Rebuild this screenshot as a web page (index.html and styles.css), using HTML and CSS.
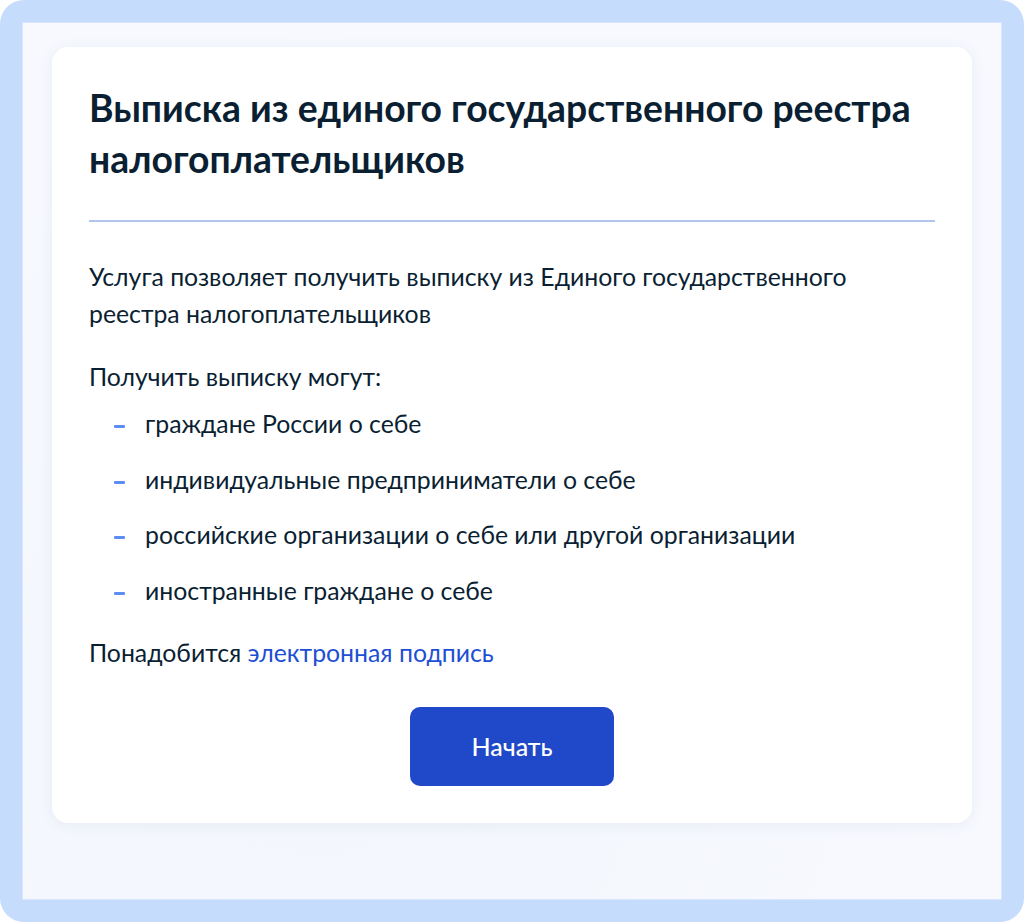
FILE: index.html
```html
<!DOCTYPE html>
<html lang="ru">
<head>
    <meta charset="UTF-8">
    <meta name="viewport" content="width=device-width, initial-scale=1.0">
    <title>Выписка из ЕГРН</title>
    <link rel="stylesheet" href="styles.css">
</head>
<body>
    <div class="frame">
        <div class="screen">
            <div class="card">
                <h1 class="title">Выписка из единого государственного реестра налогоплательщиков</h1>
                <hr class="divider">

                <p class="text">Услуга позволяет получить выписку из Единого государственного реестра налогоплательщиков</p>

                <p class="text text-lead">Получить выписку могут:</p>
                <ul class="list">
                    <li>граждане России о себе</li>
                    <li>индивидуальные предприниматели о себе</li>
                    <li>российские организации о себе или другой организации</li>
                    <li>иностранные граждане о себе</li>
                </ul>

                <p class="text text-note">Понадобится <a href="#" class="link">электронная подпись</a></p>

                <div class="actions">
                    <button type="button" class="start-button">Начать</button>
                </div>
            </div>
        </div>
    </div>
</body>
</html>
```

FILE: styles.css
```css
body {
    margin: 0;
    background-color: #ffffff;
    font-family: Lato, "Open Sans", sans-serif;
    color: #0b1f33;
}

.frame {
    height: 922px;
    box-sizing: border-box;
    padding: 22px;
    background-color: #c5dcfd;
    border-radius: 24px;
}

.screen {
    height: 100%;
    box-sizing: border-box;
    padding: 24px 29px;
    background: radial-gradient(ellipse at 30% 80%, #f3f6fc 0%, #f7f9fe 70%);
    border: 1px solid #d9e6fb;
}

.card {
    background-color: #ffffff;
    border-radius: 16px;
    padding: 35px 37px 37px;
    box-shadow: 0 2px 14px rgba(60, 90, 150, 0.08);
}

.title {
    margin: 0;
    font-size: 37.3px;
    line-height: 51px;
    font-weight: 700;
    color: #0b1f33;
}

.divider {
    margin: 36px 0 36px;
    border: none;
    height: 2px;
    background-color: #b1c5ef;
}

.text {
    margin: 0;
    font-size: 24.8px;
    line-height: 37px;
}

.text-lead {
    margin-top: 26px;
}

.text-note {
    margin-top: 25px;
}

.list {
    list-style: none;
    margin: 10px 0 0;
    padding: 0;
    font-size: 24.8px;
    line-height: 37px;
}

.list li {
    display: flex;
    align-items: center;
    gap: 20px;
    padding-left: 25px;
}

.list li + li {
    margin-top: 18.5px;
}

.list li::before {
    content: "";
    flex: none;
    width: 11px;
    height: 3px;
    margin-top: 6px;
    border-radius: 1px;
    background-color: #5b8df2;
}

.link {
    color: #1d4fd4;
    text-decoration: none;
}

.actions {
    display: flex;
    justify-content: center;
    margin-top: 36px;
}

.start-button {
    width: 204px;
    height: 79px;
    border: none;
    border-radius: 10px;
    background-color: #1f49c9;
    color: #ffffff;
    font-family: Lato, "Open Sans", sans-serif;
    font-size: 25px;
    font-weight: 500;
}
```
